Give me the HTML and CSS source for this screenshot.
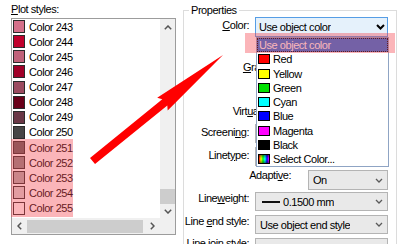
FILE: index.html
```html
<!DOCTYPE html>
<html>
<head>
<meta charset="utf-8">
<link rel="stylesheet" href="styles.css">
</head>
<body>
<div class="dialog">
  <section class="styles-panel">
    <div class="panel-label"><u>P</u>lot styles:</div>
    <div class="listbox">
      <div class="list-rows">
        <div class="row"><span class="sw" style="background:#d4708a"></span>Color 243</div>
        <div class="row"><span class="sw" style="background:#c0002c"></span>Color 244</div>
        <div class="row"><span class="sw" style="background:#c0627a"></span>Color 245</div>
        <div class="row"><span class="sw" style="background:#a00028"></span>Color 246</div>
        <div class="row"><span class="sw" style="background:#9b4b60"></span>Color 247</div>
        <div class="row"><span class="sw" style="background:#690019"></span>Color 248</div>
        <div class="row"><span class="sw" style="background:#693746"></span>Color 249</div>
        <div class="row"><span class="sw" style="background:#464646"></span>Color 250</div>
        <div class="row"><span class="sw" style="background:#606060"></span>Color 251</div>
        <div class="row"><span class="sw" style="background:#8a8a8a"></span>Color 252</div>
        <div class="row"><span class="sw" style="background:#b0b0b0"></span>Color 253</div>
        <div class="row"><span class="sw" style="background:#d8d8d8"></span>Color 254</div>
        <div class="row"><span class="sw" style="background:#ffffff"></span>Color 255</div>
      </div>
      <div class="vscroll">
        <span class="sb-btn up"><svg width="8" height="5" viewBox="0 0 8 5"><polyline points="0.8,4.2 4,1 7.2,4.2" class="sb-glyph"/></svg></span>
        <span class="vtrack"><span class="vthumb"></span></span>
        <span class="sb-btn down"><svg width="8" height="5" viewBox="0 0 8 5"><polyline points="0.8,0.8 4,4 7.2,0.8" class="sb-glyph"/></svg></span>
      </div>
      <div class="hscroll">
        <span class="sb-btn"><svg width="5" height="8" viewBox="0 0 5 8"><polyline points="4.2,0.8 1,4 4.2,7.2" class="sb-glyph"/></svg></span>
        <span class="htrack"><span class="hthumb"></span></span>
        <span class="sb-btn"><svg width="5" height="8" viewBox="0 0 5 8"><polyline points="0.8,0.8 4,4 0.8,7.2" class="sb-glyph"/></svg></span>
      </div>
      <div class="corner"></div>
    </div>
  </section>

  <fieldset class="props">
    <legend>Properties</legend>
    <div class="props-grid">
      <div class="prop-row">
        <label><u>C</u>olor:</label>
        <div class="combo combo-active">
          <span>Use object color</span>
          <svg class="chev-bold" width="9" height="6" viewBox="0 0 9 6"><polyline points="1,1 4.5,4.5 8,1"/></svg>
          <ul class="dropdown">
            <li class="item selected">Use object color</li>
            <li class="item"><span class="isw" style="background:#ff0000"></span>Red</li>
            <li class="item"><span class="isw" style="background:#ffff00"></span>Yellow</li>
            <li class="item"><span class="isw" style="background:#00e000"></span>Green</li>
            <li class="item"><span class="isw" style="background:#00ffff"></span>Cyan</li>
            <li class="item"><span class="isw" style="background:#0000ff"></span>Blue</li>
            <li class="item"><span class="isw" style="background:#ff00ff"></span>Magenta</li>
            <li class="item"><span class="isw" style="background:#000000"></span>Black</li>
            <li class="item"><span class="isw rainbow"></span>Select Color...</li>
          </ul>
        </div>
      </div>
      <div class="prop-row short">
        <div class="combo small hidden-ctl"></div>
      </div>
      <div class="prop-row short">
        <label><u>G</u>rayscale:</label>
        <div class="combo small hidden-ctl"></div>
      </div>
      <div class="prop-row short">
        <div class="combo small hidden-ctl"></div>
      </div>
      <div class="prop-row short">
        <label>Virt<u>u</u>al pen #:</label>
        <div class="combo small hidden-ctl"></div>
      </div>
      <div class="prop-row">
        <label>Screeni<u>n</u>g:</label>
        <div class="combo hidden-ctl"></div>
      </div>
      <div class="prop-row">
        <label>Linet<u>y</u>pe:</label>
        <div class="combo hidden-ctl"></div>
      </div>
      <div class="prop-row short up2">
        <label>Adapti<u>v</u>e:</label>
        <div class="combo small">
          <span>On</span>
          <svg class="chev" width="8" height="5" viewBox="0 0 8 5"><polyline points="1,1 4,4 7,1"/></svg>
        </div>
      </div>
      <div class="prop-row up1">
        <label>Line<u>w</u>eight:</label>
        <div class="combo h19">
          <span class="lw"><span class="lw-line"></span>0.1500 mm</span>
          <svg class="chev" width="8" height="5" viewBox="0 0 8 5"><polyline points="1,1 4,4 7,1"/></svg>
        </div>
      </div>
      <div class="prop-row up1">
        <label>Line <u>e</u>nd style:</label>
        <div class="combo h19">
          <span>Use object end style</span>
          <svg class="chev" width="8" height="5" viewBox="0 0 8 5"><polyline points="1,1 4,4 7,1"/></svg>
        </div>
      </div>
      <div class="prop-row up2">
        <label>Line <u>j</u>oin style:</label>
        <div class="combo h19">
          <span>Use object join style</span>
          <svg class="chev" width="8" height="5" viewBox="0 0 8 5"><polyline points="1,1 4,4 7,1"/></svg>
        </div>
      </div>
    </div>
  </fieldset>
</div>

<div class="mark mark-list"></div>
<div class="mark mark-menu"></div>

<svg class="annot-arrow" width="400" height="244" viewBox="0 0 400 244">
  <polygon points="90,157.9 162.3,99.2 157.2,97.75 223,55 167.7,110.6 167.3,105.4 95,164.1"/>
</svg>
</body>
</html>
```

FILE: styles.css
```css
* {
  box-sizing: border-box;
}

html,
body {
  margin: 0;
  padding: 0;
}

body {
  position: relative;
  width: 400px;
  height: 244px;
  overflow: hidden;
  background: #ffffff;
  color: #000000;
  font-family: "Liberation Sans", Arial, sans-serif;
  font-size: 11px;
  letter-spacing: -0.45px;
  line-height: 14px;
}

.dialog {
  display: flex;
  align-items: flex-start;
  padding-left: 11px;
}

/* ---------- left: plot styles list ---------- */

.styles-panel {
  flex: none;
  width: 165px;
}

.panel-label {
  height: 18px;
  line-height: 18px;
}

.listbox {
  display: grid;
  grid-template-columns: 148px 15px;
  grid-template-rows: 199px 16px;
  height: 217px;
  border: 1px solid #9c9c9c;
}

.list-rows {
  overflow: hidden;
}

.row {
  display: flex;
  align-items: center;
  gap: 4px;
  height: 15.125px;
  padding-left: 1px;
  white-space: nowrap;
}

.sw {
  flex: none;
  width: 12px;
  height: 13px;
  border: 1px solid #2a2a2a;
}

.vscroll {
  display: flex;
  flex-direction: column;
  background: #f0f0f0;
}

.sb-btn {
  display: flex;
  flex: none;
  align-items: center;
  justify-content: center;
}

.vscroll .up {
  height: 16px;
}

.vscroll .down {
  height: 14px;
}

.vtrack {
  display: flex;
  flex: 1;
  flex-direction: column;
  justify-content: flex-end;
}

.vthumb {
  height: 15px;
  background: #cdcdcd;
}

.hscroll {
  display: flex;
  background: #f0f0f0;
}

.hscroll .sb-btn {
  width: 15px;
}

.htrack {
  display: flex;
  flex: 1;
  align-items: center;
}

.hthumb {
  width: 116px;
  height: 13px;
  background: #cdcdcd;
}

.corner {
  background: #f0f0f0;
}

.sb-glyph {
  fill: none;
  stroke: #555555;
  stroke-width: 1.5;
}

/* ---------- right: properties group ---------- */

.props {
  flex: none;
  width: 214px;
  height: 262px;
  min-width: 0;
  margin: 3px 0 0 7px;
  padding: 0 8px 0 0;
  border: 1px solid #dcdcdc;
}

.props legend {
  margin-left: 5px;
  padding: 0 2px;
  line-height: 14px;
}

.props-grid {
  display: grid;
  grid-template-columns: minmax(0, 1fr);
  grid-template-rows: 20px 22px 22px 22px 21px 23px 23px 22px 23px 23px 20px;
}

.prop-row {
  display: flex;
  align-items: flex-start;
  justify-content: flex-end;
  gap: 6px;
  min-width: 0;
}

.prop-row.short {
  gap: 17px;
}

.prop-row label {
  flex: none;
  white-space: nowrap;
  line-height: 14px;
  margin-top: 1px;
}

.prop-row.up1 label {
  margin-top: -1px;
}

.prop-row.up2 label {
  margin-top: -2px;
}

.combo {
  position: relative;
  display: flex;
  flex: none;
  align-items: center;
  justify-content: space-between;
  width: 133px;
  height: 20px;
  padding: 0 4px 0 4px;
  border: 1px solid #b4b4b4;
  background: #e9e9e9;
  white-space: nowrap;
}

.combo > span {
  overflow: hidden;
}

.combo.small {
  width: 80px;
}

.combo.h19 {
  height: 19px;
}

.combo.hidden-ctl {
  height: 19px;
}

.combo-active {
  padding: 0 2px 0 3px;
  border-color: #569de5;
  background: #e5f1fb;
}

.chev-bold {
  flex: none;
}

.chev-bold polyline {
  fill: none;
  stroke: #000000;
  stroke-width: 2;
}

.chev {
  flex: none;
}

.chev polyline {
  fill: none;
  stroke: #5a5a5a;
  stroke-width: 1.3;
}

.lw {
  display: flex;
  align-items: center;
  gap: 3px;
  padding-left: 2px;
}

.lw-line {
  flex: none;
  width: 18px;
  height: 2px;
  background: #111111;
}

/* ---------- open dropdown ---------- */

.dropdown {
  position: absolute;
  top: 19px;
  left: 0;
  z-index: 5;
  width: 133px;
  margin: 0;
  padding: 0;
  list-style: none;
  border: 1px solid #8fa4c4;
  background: #ffffff;
}

.item {
  display: flex;
  align-items: center;
  gap: 3px;
  height: 14.25px;
  padding-left: 1px;
  white-space: nowrap;
}

.item.selected {
  padding-left: 2px;
  background: #1f73e0;
  color: #ffffff;
  outline: 1px dotted #000000;
  outline-offset: -1px;
}

.isw {
  flex: none;
  width: 12px;
  height: 10px;
  border: 1px solid #000000;
}

.isw.rainbow {
  background:
    linear-gradient(to bottom, rgba(0, 0, 0, 0.45), rgba(0, 0, 0, 0) 40%, rgba(0, 0, 0, 0) 60%, rgba(0, 0, 0, 0.45)),
    linear-gradient(to right, #ff0000, #ffff00, #00ff00, #00ffff, #0000ff, #ff00ff);
}

/* ---------- annotations ---------- */

.mark {
  position: absolute;
  z-index: 6;
  background: rgba(245, 70, 80, 0.4);
}

.mark-list {
  left: 11px;
  top: 138.5px;
  width: 62px;
  height: 78.5px;
}

.mark-menu {
  left: 245px;
  top: 33px;
  width: 150px;
  height: 20px;
}

.annot-arrow {
  position: absolute;
  left: 0;
  top: 0;
  z-index: 7;
  pointer-events: none;
}

.annot-arrow polygon {
  fill: #ff0000;
}
```
